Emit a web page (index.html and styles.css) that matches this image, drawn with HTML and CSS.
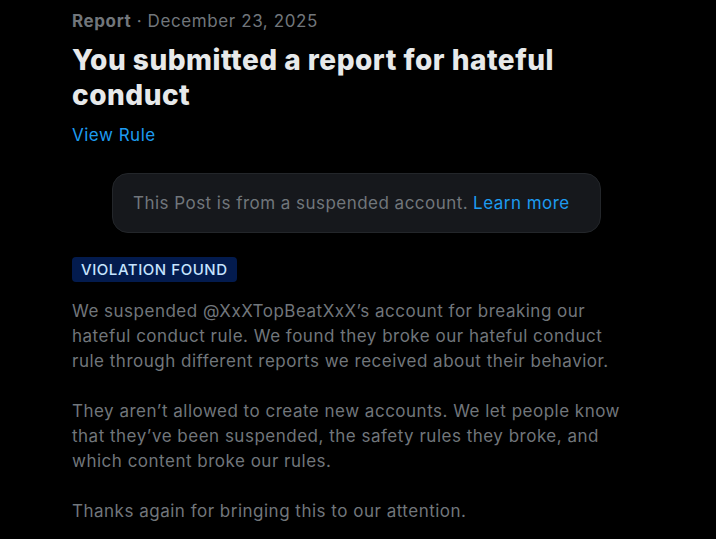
FILE: index.html
```html
<!DOCTYPE html>
<html>
<head>
<meta charset="utf-8">
<link rel="stylesheet" href="styles.css">
</head>
<body>
<main class="page">
  <div class="meta"><span class="meta-kind">Report</span> · December 23, 2025</div>
  <h1 class="title">You submitted a report for hateful conduct</h1>
  <a class="link rule-link">View Rule</a>
  <div class="notice">This Post is from a suspended account. <a class="link">Learn more</a></div>
  <div class="badge">VIOLATION FOUND</div>
  <div class="body">
    <p>We suspended @XxXTopBeatXxX’s account for breaking our hateful conduct rule. We found they broke our hateful conduct rule through different reports we received about their behavior.</p>
    <p>They aren’t allowed to create new accounts. We let people know that they’ve been suspended, the safety rules they broke, and which content broke our rules.</p>
    <p>Thanks again for bringing this to our attention.</p>
  </div>
</main>
</body>
</html>
```
FILE: styles.css
```css
html, body {
  margin: 0;
  background: #000;
  height: 100%;
  overflow: hidden;
}
body {
  font-family: Inter, "Noto Sans", sans-serif;
  color: #71767b;
}
.page {
  display: flex;
  flex-direction: column;
  align-items: flex-start;
  padding: 9px 72px 0 72px;
  width: 560px;
}
.meta {
  font-size: 17px;
  line-height: 24px;
  letter-spacing: 0.6px;
  color: #71767b;
}
.meta-kind {
  font-weight: 700;
}
.title {
  margin: 10px 0 0 0;
  font-size: 28px;
  line-height: 35px;
  font-weight: 800;
  color: #e7e9ea;
  letter-spacing: 0.5px;
}
.link {
  color: #1d9bf0;
  text-decoration: none;
}
.rule-link {
  margin-top: 10px;
  font-size: 17px;
  line-height: 24px;
  letter-spacing: 0.5px;
}
.notice {
  box-sizing: border-box;
  margin: 26px 0 0 40px;
  width: 489px;
  height: 60px;
  display: flex;
  align-items: center;
  padding: 0 20px;
  gap: 5px;
  background: #16181c;
  border: 1px solid #23262a;
  border-radius: 16px;
  font-size: 17px;
  letter-spacing: 0.47px;
  color: #71767b;
}
.badge {
  margin-top: 24px;
  background: #031b4e;
  color: #c6e4ff;
  font-size: 15px;
  font-weight: 500;
  line-height: 25px;
  letter-spacing: 0.55px;
  padding: 0 9px;
  border-radius: 4px;
}
.body {
  margin-top: 17px;
  font-size: 17px;
  line-height: 25px;
  letter-spacing: 0.5px;
  color: #71767b;
}
.body p {
  margin: 0 0 25px 0;
}
```
